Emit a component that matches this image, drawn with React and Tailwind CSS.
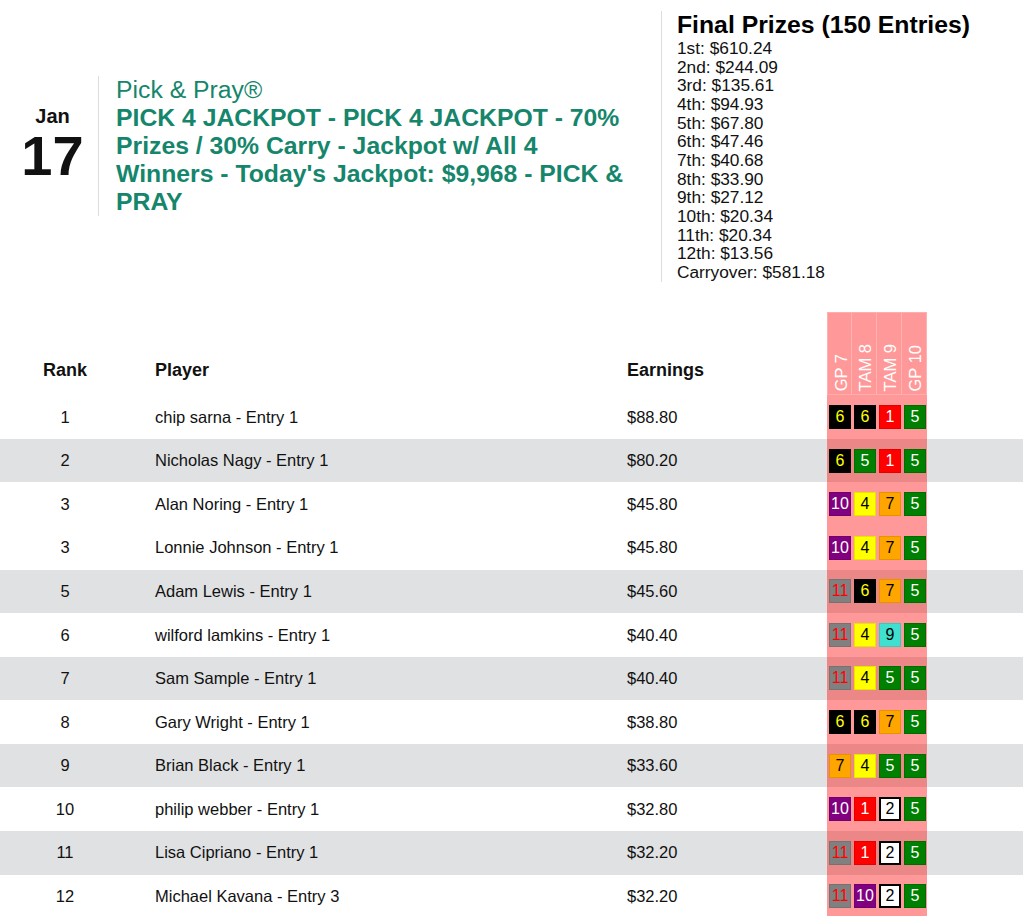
import React from 'react';

const PRIZES = [
  '1st: $610.24',
  '2nd: $244.09',
  '3rd: $135.61',
  '4th: $94.93',
  '5th: $67.80',
  '6th: $47.46',
  '7th: $40.68',
  '8th: $33.90',
  '9th: $27.12',
  '10th: $20.34',
  '11th: $20.34',
  '12th: $13.56',
  'Carryover: $581.18',
];

const RACES = ['GP 7', 'TAM 8', 'TAM 9', 'GP 10'];

const ROWS = [
  { rank: 1, name: 'chip sarna - Entry 1', earn: '$88.80', picks: [6, 6, 1, 5], shade: false },
  { rank: 2, name: 'Nicholas Nagy - Entry 1', earn: '$80.20', picks: [6, 5, 1, 5], shade: true },
  { rank: 3, name: 'Alan Noring - Entry 1', earn: '$45.80', picks: [10, 4, 7, 5], shade: false },
  { rank: 3, name: 'Lonnie Johnson - Entry 1', earn: '$45.80', picks: [10, 4, 7, 5], shade: false },
  { rank: 5, name: 'Adam Lewis - Entry 1', earn: '$45.60', picks: [11, 6, 7, 5], shade: true },
  { rank: 6, name: 'wilford lamkins - Entry 1', earn: '$40.40', picks: [11, 4, 9, 5], shade: false },
  { rank: 7, name: 'Sam Sample - Entry 1', earn: '$40.40', picks: [11, 4, 5, 5], shade: true },
  { rank: 8, name: 'Gary Wright - Entry 1', earn: '$38.80', picks: [6, 6, 7, 5], shade: false },
  { rank: 9, name: 'Brian Black - Entry 1', earn: '$33.60', picks: [7, 4, 5, 5], shade: true },
  { rank: 10, name: 'philip webber - Entry 1', earn: '$32.80', picks: [10, 1, 2, 5], shade: false },
  { rank: 11, name: 'Lisa Cipriano - Entry 1', earn: '$32.20', picks: [11, 1, 2, 5], shade: true },
  { rank: 12, name: 'Michael Kavana - Entry 3', earn: '$32.20', picks: [11, 10, 2, 5], shade: false },
];

/* saddle cloth colours */
const CLOTH = {
  1: 'bg-[#ff0000] text-white border border-black/10',
  2: 'bg-white text-black border-2 border-black',
  4: 'bg-[#ffff00] text-black border border-black/10',
  5: 'bg-[#008000] text-white border border-black/15',
  6: 'bg-black text-[#ffff00] border border-black/10',
  7: 'bg-[#ffa500] text-black border border-black/10',
  9: 'bg-[#40e0d0] text-black border border-black/10',
  10: 'bg-[#800080] text-white border border-black/10',
  11: 'bg-[#808080] text-[#ff0000] border border-black/10',
};

function Cloth({ n }) {
  return (
    <div className={`w-[22px] h-[24px] flex items-center justify-center text-[16px] leading-none ${CLOTH[n]}`}>
      {n}
    </div>
  );
}

export default function App() {
  return (
    <div className="min-h-screen bg-white text-[#111] pt-[11px]" style={{ fontFamily: '"Liberation Sans", Arial, sans-serif' }}>
      {/* header */}
      <div className="flex items-center">
        <div className="w-[98px] pl-[7px] text-center font-bold">
          <div className="text-[20px] leading-[20px]">Jan</div>
          <div className="text-[56px] leading-[60px]">17</div>
        </div>
        <div className="w-[533px] border-l border-[#dddddd] pl-[17px] text-[24.75px] leading-[28px] text-[#15866c]">
          <div>Pick &amp; Pray®</div>
          <div className="font-bold">
            PICK 4 JACKPOT - PICK 4 JACKPOT - 70% Prizes / 30% Carry - Jackpot w/ All 4 Winners - Today's Jackpot: $9,968 - PICK &amp; PRAY
          </div>
        </div>
        <div className="ml-[30px] border-l border-[#dddddd] pl-[15px]">
          <div className="text-[24.75px] leading-[28px] font-bold text-black">Final Prizes (150 Entries)</div>
          {PRIZES.map((p) => (
            <div key={p} className="text-[17.3px] leading-[18.67px]">{p}</div>
          ))}
        </div>
      </div>

      {/* standings */}
      <div className="mt-[30px]">
        <div className="flex h-[83.4px] items-end text-[18px] leading-[21px] font-bold">
          <div className="w-[130px] pb-[14px] text-center">Rank</div>
          <div className="w-[496px] pb-[14px] pl-[25px]">Player</div>
          <div className="w-[201px] pb-[14px] pl-[1px]">Earnings</div>
          <div className="flex h-full w-[100px] shrink-0 bg-[#ff9999] border-y border-white/20">
            {RACES.map((r, i) => (
              <div
                key={r}
                className={`w-[25px] shrink-0 flex items-end justify-center pb-[3px] pl-[3px] border-r border-white/25 ${i === 0 ? 'border-l' : ''}`}
              >
                <span className="[writing-mode:vertical-rl] rotate-180 text-white text-[16.5px] leading-[19px] font-normal whitespace-nowrap">
                  {r}
                </span>
              </div>
            ))}
          </div>
        </div>

        {ROWS.map((row, i) => (
          <div key={i} className={`flex h-[43.6px] items-center text-[16.5px] ${row.shade ? 'bg-[#e0e1e3]' : 'bg-white'}`}>
            <div className="w-[130px] text-center">{row.rank}</div>
            <div className="w-[496px] pl-[25px]">{row.name}</div>
            <div className="w-[201px] pl-[1px]">{row.earn}</div>
            <div className="flex h-full w-[100px] shrink-0 items-center gap-[3px] pl-[2px] bg-[rgba(255,0,0,0.4)]">
              {row.picks.map((n, j) => (
                <Cloth key={j} n={n} />
              ))}
            </div>
          </div>
        ))}
      </div>
    </div>
  );
}
